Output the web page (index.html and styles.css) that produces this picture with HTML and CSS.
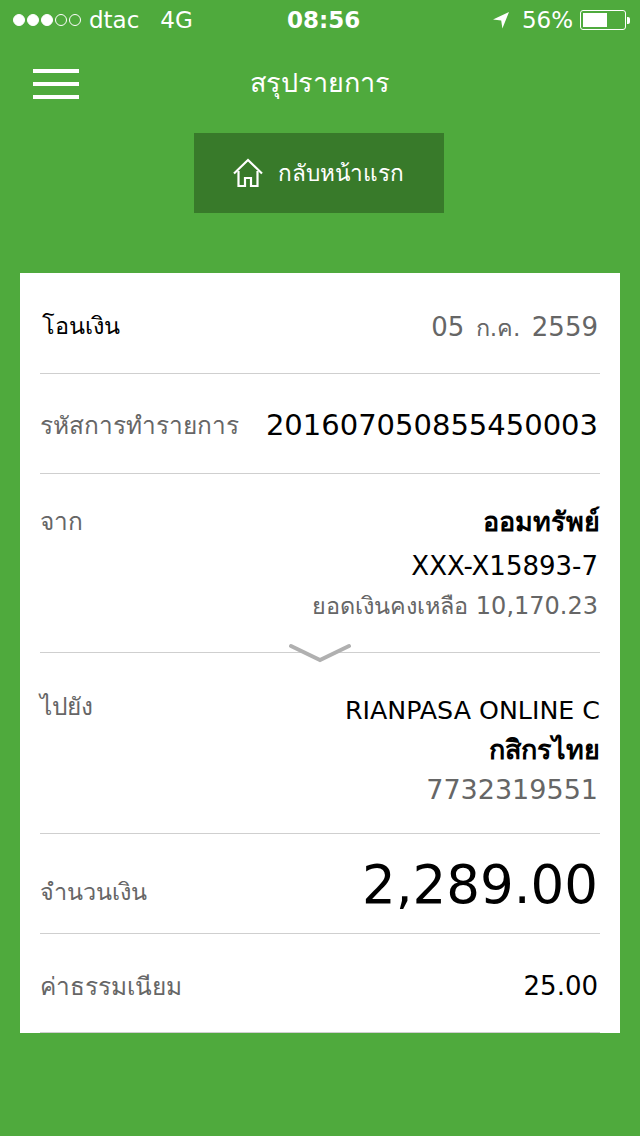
FILE: index.html
```html
<!DOCTYPE html>
<html lang="th">
<head>
  <meta charset="UTF-8">
  <meta name="viewport" content="width=device-width, initial-scale=1.0">
  <title>สรุปรายการ</title>
  <link rel="stylesheet" href="styles.css">
</head>
<body>

<div class="status-bar">
  <div class="status-left">
    <span class="signal">
      <i class="dot on"></i><i class="dot on"></i><i class="dot on"></i><i class="dot"></i><i class="dot"></i>
    </span>
    <span class="carrier">dtac</span>
    <span class="network">4G</span>
  </div>
  <div class="status-time">08:56</div>
  <div class="status-right">
    <svg class="arrow" width="18" height="18" viewBox="0 0 18 18"><path d="M17 1 L1 8.6 L9.2 9.4 L10.4 17.5 Z" fill="#fff"/></svg>
    <span class="percent">56%</span>
    <span class="battery"><span class="battery-level"></span></span>
    <span class="battery-tip"></span>
  </div>
</div>

<header class="top-bar">
  <div class="menu-icon"><span></span><span></span><span></span></div>
  <h1 class="title">สรุปรายการ</h1>
</header>

<div class="home-wrap">
  <a class="home-btn">
    <svg width="32" height="30" viewBox="0 0 32 30" fill="none" stroke="#fff" stroke-width="2.2">
      <path d="M2 15.5 L16 2 L30 15.5"/>
      <path d="M6.5 13 V28 H13 V20 H19 V28 H25.5 V13"/>
    </svg>
    <span>กลับหน้าแรก</span>
  </a>
</div>

<div id="summary-card">
  <div class="row row-head">
    <div class="label dark">โอนเงิน</div>
    <div class="date">05 <span class="th-small">ก.ค.</span> 2559</div>
  </div>
  <div class="row row-ref">
    <div class="label">รหัสการทำรายการ</div>
    <div class="ref">201607050855450003</div>
  </div>
  <div class="row row-from">
    <div class="label">จาก</div>
    <div class="detail">
      <div class="line bold">ออมทรัพย์</div>
      <div class="line account-no">XXX-X15893-7</div>
      <div class="line muted small"><span class="th-small">ยอดเงินคงเหลือ</span> 10,170.23</div>
    </div>
    <svg class="chevron" width="62" height="22" viewBox="0 0 62 22">
      <path d="M2 3 L31 17 L60 3" fill="#fff" stroke="#b0b0b0" stroke-width="4" stroke-linecap="round"/>
    </svg>
  </div>
  <div class="row row-to">
    <div class="label">ไปยัง</div>
    <div class="detail">
      <div class="line name">RIANPASA ONLINE C</div>
      <div class="line bold">กสิกรไทย</div>
      <div class="line muted account">7732319551</div>
    </div>
  </div>
  <div class="row row-amount">
    <div class="label">จำนวนเงิน</div>
    <div class="amount">2,289.00</div>
  </div>
  <div class="row row-fee">
    <div class="label">ค่าธรรมเนียม</div>
    <div class="fee">25.00</div>
  </div>
</div>

</body>
</html>
```

FILE: styles.css
```css
* {
  box-sizing: border-box;
}

body {
  margin: 0;
  height: 1136px;
  overflow: hidden;
  background-color: #4faa3d;
  color: #fff;
  font-family: 'DejaVu Sans', 'Noto Sans', sans-serif;
}

.status-bar {
  display: flex;
  justify-content: space-between;
  align-items: center;
  height: 40px;
  padding: 0 10px 0 13px;
  font-size: 23px;
  position: relative;
}

.status-left {
  display: flex;
  align-items: center;
}

.signal {
  display: flex;
  gap: 2px;
  margin-right: 8px;
}

.dot {
  width: 12px;
  height: 12px;
  border: 1px solid #fff;
  border-radius: 50%;
}

.dot.on {
  background-color: #fff;
}

.carrier {
  margin-right: 21px;
}

.status-time {
  position: absolute;
  left: 287px;
  font-size: 23px;
  font-weight: bold;
}

.status-right {
  display: flex;
  align-items: center;
}

.arrow {
  margin-right: 12px;
}

.percent {
  margin-right: 7px;
}

.battery {
  display: block;
  width: 46px;
  height: 20px;
  padding: 2px;
  border: 1px solid #fff;
  border-radius: 3px;
}

.battery-level {
  display: block;
  width: 24px;
  height: 100%;
  background-color: #fff;
}

.battery-tip {
  width: 3px;
  height: 7px;
  margin-left: 1px;
  background-color: #fff;
  border-radius: 0 2px 2px 0;
}

.top-bar {
  display: flex;
  align-items: center;
  justify-content: center;
  height: 84px;
  position: relative;
}

.menu-icon {
  position: absolute;
  left: 33px;
  top: 29px;
  display: flex;
  flex-direction: column;
  gap: 9px;
  width: 46px;
}

.menu-icon span {
  height: 4px;
  background-color: #fff;
}

.title {
  margin: 0;
  font-size: 27px;
  font-weight: normal;
}

.home-wrap {
  display: flex;
  justify-content: center;
  margin-top: 9px;
  padding-right: 2px;
}

.home-btn {
  display: flex;
  align-items: center;
  justify-content: center;
  gap: 14px;
  width: 250px;
  height: 80px;
  padding-right: 2px;
  background-color: #387a2a;
  font-size: 22.6px;
}

#summary-card {
  margin: 60px 20px 0;
  height: 760px;
  padding: 0 20px;
  background-color: #fff;
  color: #000;
}

.row {
  display: flex;
  justify-content: space-between;
  border-bottom: 1px solid #cfcfcf;
  position: relative;
}

.row-head, .row-ref, .row-amount, .row-fee {
  align-items: center;
  height: 100px;
}

.row-head { height: 101px; padding-top: 4px; }
.row-ref { padding-top: 3px; }
.row-from { height: 179px; padding-top: 28px; }
.row-to { height: 181px; padding-top: 36px; }
.row-amount { height: 100px; padding-top: 8px; }
.row-fee { height: 99px; padding-top: 6px; }

.row-amount .label { padding-top: 8px; font-size: 23.4px; }
.row-to .label { margin-top: -2px; }

.label {
  font-size: 24.4px;
  color: #666;
}

.label.dark {
  color: #000;
  padding-left: 2px;
  font-size: 23.4px;
}

.bold {
  font-weight: bold;
}

.date {
  padding: 4px 2px 0 0;
  font-size: 26px;
  word-spacing: 3px;
  color: #666;
}

.th-small {
  font-size: 23.4px;
}

.ref {
  padding-right: 2px;
  font-size: 29px;
}

.detail {
  text-align: right;
  font-size: 25.3px;
}

.line {
  height: 40.5px;
  line-height: 40px;
}

.name {
  line-height: 43px;
}

.account-no {
  padding-right: 2px;
  padding-top: 3px;
  font-size: 26px;
}

.muted {
  color: #666;
  padding-right: 2px;
}

.small {
  font-size: 24px;
  padding-top: 3px;
}

.account {
  font-size: 27px;
}

.line.bold {
  font-size: 27px;
}

.chevron {
  position: absolute;
  left: 249px;
  bottom: -13px;
}

.amount {
  padding-right: 2px;
  margin-top: -6px;
  font-size: 53px;
}

.fee {
  padding-right: 2px;
  font-size: 26px;
}
```
